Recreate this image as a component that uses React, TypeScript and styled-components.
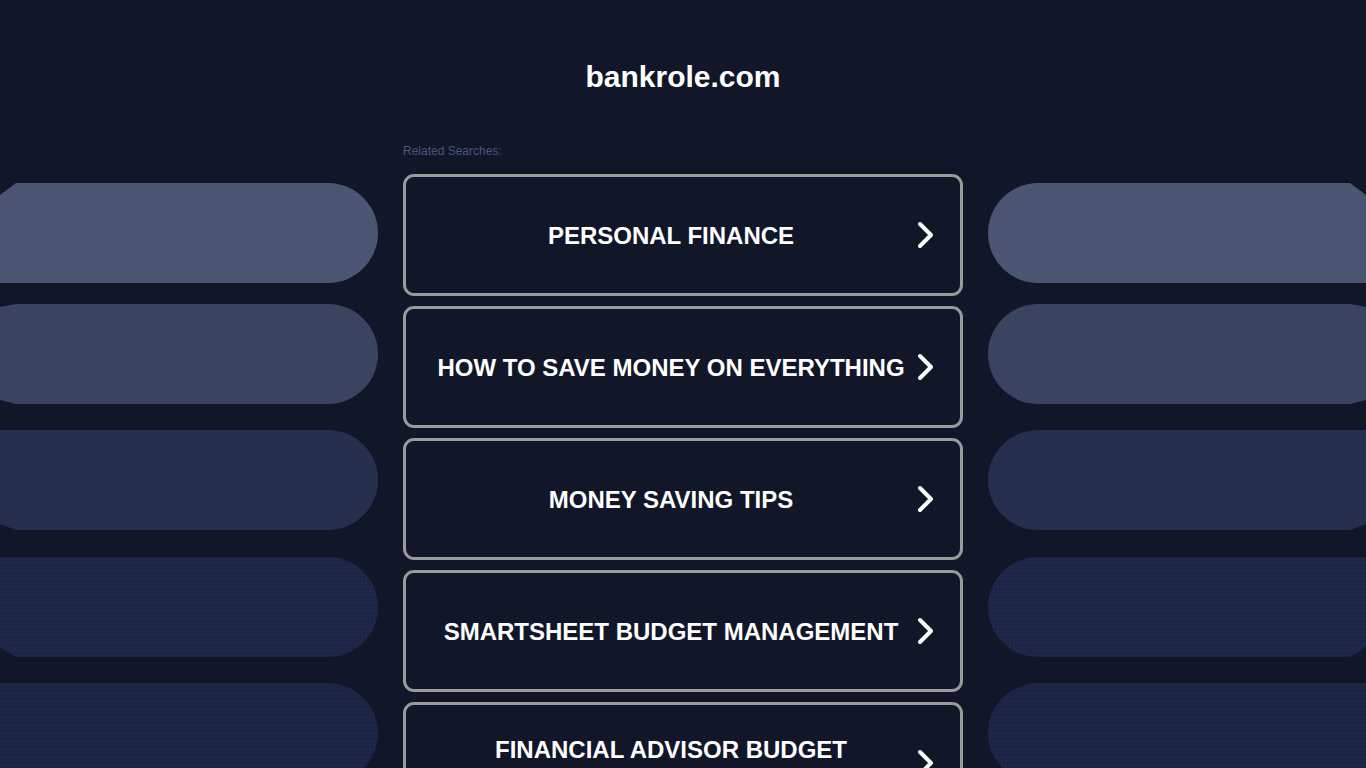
import styled, { createGlobalStyle } from 'styled-components';

const GlobalStyle = createGlobalStyle`
    html, body {
        margin: 0;
        padding: 0;
        background: #111729;
    }
    body {
        font-family: "Liberation Sans", Arial, sans-serif;
        overflow: hidden;
    }
`;

const Page = styled.div`
    display: grid;
    grid-template-columns: 1fr 560px 1fr;
    width: 100%;
    height: 768px;
    overflow: hidden;
    background: #111729;
`;

const Side = styled.div<{ $right?: boolean }>`
    display: flex;
    flex-direction: column;
    align-items: ${(p) => (p.$right ? 'flex-end' : 'flex-start')};
    padding-top: 183px;
`;

const Pill = styled.div<{ $right?: boolean; $color: string; $top: number; $bottom: number; $gap: number; $dots?: boolean }>`
    flex: none;
    width: 378px;
    height: 100px;
    margin-top: ${(p) => p.$gap}px;
    background-color: ${(p) => p.$color};
    background-image: ${(p) =>
        p.$dots ? 'radial-gradient(rgba(120, 140, 200, 0.08) 0.6px, transparent 0.9px)' : 'none'};
    background-size: 4px 4px;
    border-radius: ${(p) => (p.$right ? '50px 0 0 50px' : '0 50px 50px 0')};
    clip-path: ${(p) =>
        p.$right
            ? `polygon(0 0, calc(100% - 16px) 0, 100% ${p.$top}px, 100% calc(100% - ${p.$bottom}px), calc(100% - 16px) 100%, 0 100%)`
            : `polygon(16px 0, 100% 0, 100% 100%, 16px 100%, 0 calc(100% - ${p.$bottom}px), 0 ${p.$top}px)`};
`;

const Center = styled.main`
    display: flex;
    flex-direction: column;
`;

const Title = styled.h1`
    margin: 60px 0 0;
    font-size: 30px;
    line-height: 34px;
    font-weight: 700;
    color: #ffffff;
    text-align: center;
`;

const Related = styled.div`
    margin-top: 50px;
    font-size: 12px;
    line-height: 14px;
    color: #4a5578;
`;

const List = styled.div`
    display: flex;
    flex-direction: column;
    gap: 10px;
    margin-top: 16px;
`;

const Card = styled.a`
    display: flex;
    align-items: center;
    box-sizing: border-box;
    height: 122px;
    padding: 0 24px 0 30px;
    border: 3px solid #9a9a9a;
    border-radius: 11px;
    background: #111729;
    color: #ffffff;
    text-decoration: none;
    flex: none;
`;

const CardText = styled.span`
    flex: 1;
    padding-top: 2px;
    text-align: center;
    font-size: 24px;
    line-height: 28px;
    font-weight: 700;
    text-transform: uppercase;
`;

const Chevron = styled.svg`
    flex: none;
    width: 20px;
    height: 28px;
    margin-left: 10px;
`;

const pills = [
    { color: '#4b5573', gap: 0, top: 12, bottom: 0 },
    { color: '#3a4360', gap: 21, top: 3, bottom: 4 },
    { color: '#262f4d', gap: 26, top: 0, bottom: 6 },
    { color: '#1c2546', gap: 27, top: 0, bottom: 10, dots: true },
    { color: '#1b2444', gap: 26, top: 0, bottom: 10, dots: true },
];

const searches = [
    'Personal Finance',
    'How to Save Money on Everything',
    'Money Saving Tips',
    'Smartsheet Budget Management',
    'Financial Advisor Budget Template',
];

function Stack({ right }: { right?: boolean }) {
    return (
        <Side $right={right}>
            {pills.map((p, i) => (
                <Pill
                    key={i}
                    $right={right}
                    $color={p.color}
                    $gap={p.gap}
                    $top={p.top}
                    $bottom={p.bottom}
                    $dots={p.dots}
                />
            ))}
        </Side>
    );
}

export default function App() {
    return (
        <>
            <GlobalStyle />
            <Page>
                <Stack />
                <Center>
                    <Title>bankrole.com</Title>
                    <Related>Related Searches:</Related>
                    <List>
                        {searches.map((s) => (
                            <Card key={s} href="#">
                                <CardText>{s}</CardText>
                                <Chevron viewBox="0 0 20 28">
                                    <polyline
                                        points="4,3 15,14 4,25"
                                        fill="none"
                                        stroke="#ffffff"
                                        strokeWidth="4"
                                        strokeLinecap="round"
                                        strokeLinejoin="round"
                                    />
                                </Chevron>
                            </Card>
                        ))}
                    </List>
                </Center>
                <Stack right />
            </Page>
        </>
    );
}
